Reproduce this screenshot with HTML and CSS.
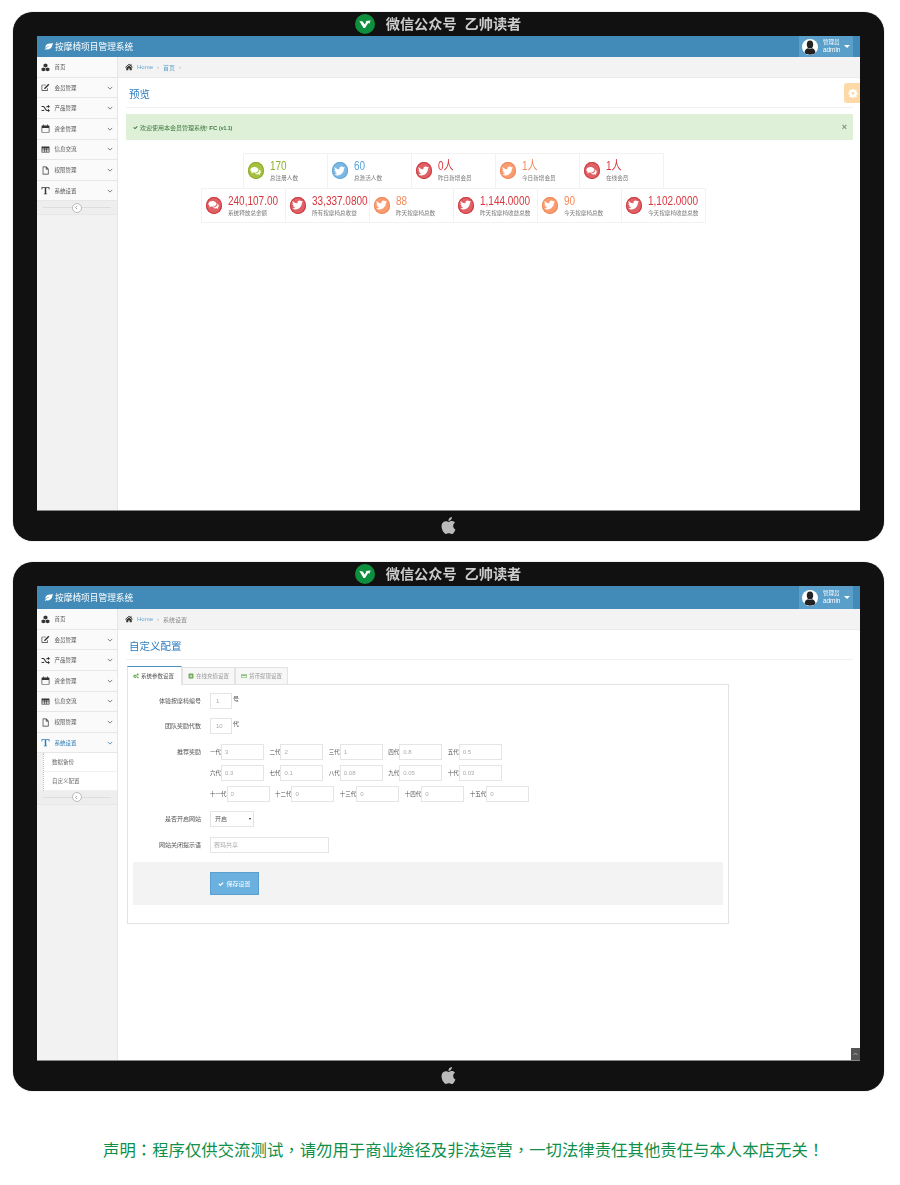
FILE: index.html
```html
<!DOCTYPE html>
<html>
    <head>
        <title>按摩椅项目管理系统</title>
        <meta charset="UTF-8">
        <link rel="stylesheet" href="styles.css">
    </head>
    <body>
        <svg class="defs" width="0" height="0">
            <symbol id="i-twitter" viewBox="0 0 24 24"><path d="M23.953 4.57a10 10 0 01-2.825.775 4.958 4.958 0 002.163-2.723c-.951.555-2.005.959-3.127 1.184a4.92 4.92 0 00-8.384 4.482C7.69 8.095 4.067 6.13 1.64 3.162a4.822 4.822 0 00-.666 2.475c0 1.71.87 3.213 2.188 4.096a4.904 4.904 0 01-2.228-.616v.06a4.923 4.923 0 003.946 4.827 4.996 4.996 0 01-2.212.085 4.936 4.936 0 004.604 3.417 9.867 9.867 0 01-6.102 2.105c-.39 0-.779-.023-1.17-.067a13.995 13.995 0 007.557 2.209c9.053 0 13.998-7.496 13.998-13.985 0-.21 0-.42-.015-.63A9.935 9.935 0 0024 4.59z"/></symbol>
            <symbol id="i-comments" viewBox="0 0 16 16"><path d="M6.5 2C3.2 2 .6 3.9.6 6.3c0 1.3.8 2.5 2 3.3-.2.8-.6 1.5-1.1 2 1.2-.1 2.300-.6 3.100-1.300.6.1 1.200.2 1.900.2 3.300 0 5.900-1.900 5.900-4.200S9.800 2 6.500 2z"/><path d="M13.600 5.800c.1.200.1.400.1.600 0 2.900-3 5.100-6.600 5.200.9.900 2.300 1.400 3.800 1.400.5 0 1-.1 1.500-.2.700.6 1.500 1 2.500 1.100-.4-.5-.7-1-.9-1.700 1-.7 1.600-1.700 1.600-2.800 0-1.500-.8-2.800-2-3.600z"/></symbol>
            <symbol id="i-cubes" viewBox="0 0 16 16"><path d="M8 1l3.500 1.500v3.800L8 7.800 4.500 6.300V2.500zM4.300 8L7.600 9.400v3.800L4.300 14.800 1 13.200V9.400zM11.700 8l3.300 1.400v3.800l-3.300 1.600-3.300-1.600V9.400z"/></symbol>
            <symbol id="i-edit" viewBox="0 0 16 16"><path d="M2.500 3H9v1.200H2.900a.7.700 0 00-.7.700v7.400c0 .4.300.7.700.7h7.400c.4 0 .7-.3.7-.7V9.500h1.200v3c0 1-.8 1.800-1.800 1.800H2.800c-1 0-1.800-.8-1.800-1.800V4.800C1 3.800 1.500 3 2.500 3z"/><path d="M13 1.500l1.800 1.800-6.800 6.800-2.600.8.800-2.600z"/></symbol>
            <symbol id="i-random" viewBox="0 0 16 16"><path d="M1 3.500h2.600c1.500 0 2.400 1 3.300 2.300L9 9c.7 1 1.300 1.700 2.300 1.700h1V8.500L16 11.500l-3.700 3v-2h-1c-1.700 0-2.700-1.100-3.600-2.500L5.600 6.900c-.7-1-1.200-1.600-2-1.600H1zM1 10.700h2.600c.7 0 1.200-.4 1.700-1l1.100 1.600c-.7.800-1.600 1.200-2.800 1.200H1zM12.300 1.500L16 4.500l-3.700 3v-2h-1c-.8 0-1.400.5-1.900 1.100L9.300 5c.6-.8 1-1.300 2-1.300h1z"/></symbol>
            <symbol id="i-calendar" viewBox="0 0 16 16"><path fill-rule="evenodd" d="M4 .8h1.500v2H10.500v-2H12v2h1.800c.7 0 1.200.5 1.200 1.200v10c0 .7-.5 1.200-1.200 1.200H2.200C1.500 15.200 1 14.700 1 14V4c0-.7.500-1.200 1.200-1.200H4zM2.200 7v7h11.600V7z"/></symbol>
            <symbol id="i-table" viewBox="0 0 16 16"><path fill-rule="evenodd" d="M1 2.500h14v11H1zM2.200 6v2h3.200V6zM6.500 6v2h3V6zM10.600 6v2h3.200V6zM2.200 9.200v3h3.200v-3zM6.500 9.200v3h3v-3zM10.600 9.200v3h3.200v-3z"/></symbol>
            <symbol id="i-file" viewBox="0 0 16 16"><path fill-rule="evenodd" d="M3 1h6.500L13.500 5v10H3zM4.200 2.200v11.600h8.100V6H8.500V2.200zM9.700 2.800v2h2z"/></symbol>
            <symbol id="i-text" viewBox="0 0 16 16"><path d="M1 2h14v4h-1c-.2-1.500-.6-2.500-2-2.500H9.300v9.300c0 .7.500.9 1.700 1v.9H5v-.9c1.200-.1 1.700-.3 1.700-1V3.500H4C2.600 3.500 2.200 4.500 2 6H1z"/></symbol>
            <symbol id="i-leaf" viewBox="0 0 16 16"><path d="M15.500 1.500c-1 1-2.500 1.200-5 1.300C5.500 3 2.500 5.500 2.500 9c0 .6.100 1.100.3 1.600C4.500 8.500 7 7 10 6.500 7 7.800 3.800 10 1.200 13.500l1 .9c.6-.8 1.100-1.500 1.700-2 1 .7 2 1 3.100.9C12 13 15.500 8 15.500 1.500z"/></symbol>
            <symbol id="i-home" viewBox="0 0 16 16"><path d="M8 1.500l3 2.600V2.500h2v3.400l2.800 2.500-.8.900L8 3.400 1 9.300l-.8-.900z"/><path d="M8 4.800l5.500 4.700v5H9.500v-3.500h-3v3.500H2.500v-5z"/></symbol>
            <symbol id="i-gear" viewBox="0 0 16 16"><path fill-rule="evenodd" d="M6.800 1h2.400l.4 2 1.300.6 1.700-1.100 1.700 1.700-1.100 1.700.5 1.300 2.100.4v2.400l-2.100.4-.5 1.300 1.100 1.700-1.700 1.700-1.700-1.100-1.300.5-.4 2.100H6.800l-.4-2.100-1.300-.5-1.700 1.100-1.700-1.700 1.100-1.700-.5-1.300-2-.4V7.600l2-.4.500-1.300-1.100-1.700 1.700-1.700 1.700 1.100 1.300-.6zM8 5.800a2.400 2.400 0 100 4.800 2.400 2.400 0 000-4.800z"/></symbol>
            <symbol id="i-check" viewBox="0 0 16 16"><path d="M1 8.500l2.300-2.300 3 3L12.700 3 15 5.300l-8.700 8.500z"/></symbol>
            <symbol id="i-plus" viewBox="0 0 16 16"><path fill-rule="evenodd" d="M3 1.500h10c.8 0 1.500.7 1.500 1.500v10c0 .8-.7 1.500-1.500 1.500H3c-.8 0-1.500-.7-1.500-1.500V3c0-.8.700-1.500 1.500-1.500zM7 4.500V7H4.500v2H7v2.500h2V9h2.500V7H9V4.500z"/></symbol>
            <symbol id="i-card" viewBox="0 0 16 16"><path fill-rule="evenodd" d="M1 2.500h14v11H1zM2.500 4v1.800h11V4zM2.500 8v4h11V8z"/></symbol>
            <symbol id="i-cogs" viewBox="0 0 16 16"><path fill-rule="evenodd" d="M5.500 3.500l1 1.500 1.700-.3.500 1.700 1.600.7-.7 1.600.7 1.600-1.600.7-.5 1.700-1.700-.3-1 1.300-1.200-1.300-1.700.3-.5-1.700L.5 10.300l.7-1.600-.7-1.600 1.600-.7.500-1.700 1.700.3zM5.400 7a1.700 1.700 0 100 3.400 1.700 1.700 0 000-3.400z"/><circle cx="12.500" cy="4" r="2.800"/><circle cx="13" cy="11.500" r="2.300"/></symbol>
            <symbol id="i-down" viewBox="0 0 16 16"><path d="M2 5l6 6 6-6" fill="none" stroke="currentColor" stroke-width="2"/></symbol>
            <symbol id="i-left" viewBox="0 0 16 16"><path d="M10 3L5 8l5 5" fill="none" stroke="currentColor" stroke-width="2.500"/></symbol>
            <symbol id="i-apple" viewBox="0 0 24 24"><path d="M12.152 6.896c-.948 0-2.415-1.078-3.96-1.04-2.04.027-3.91 1.183-4.961 3.014-2.117 3.675-.546 9.103 1.519 12.09 1.013 1.454 2.208 3.09 3.792 3.039 1.52-.065 2.09-.987 3.935-.987 1.831 0 2.35.987 3.96.948 1.637-.026 2.676-1.48 3.676-2.948 1.156-1.688 1.636-3.325 1.662-3.415-.039-.013-3.182-1.221-3.22-4.857-.026-3.04 2.48-4.494 2.597-4.559-1.429-2.09-3.623-2.324-4.39-2.376-2-.156-3.675 1.09-4.61 1.09zM15.53 3.83c.843-1.012 1.4-2.427 1.245-3.83-1.207.052-2.662.805-3.532 1.818-.78.896-1.454 2.338-1.273 3.714 1.338.104 2.715-.688 3.559-1.701"/></symbol>
            <symbol id="i-user" viewBox="0 0 16 16"><ellipse cx="8" cy="5.500" rx="3.200" ry="4"/><path d="M2.500 14.500c0-3.500 1.500-5 3.500-5.300.6.500 1.300.8 2 .8s1.400-.3 2-.8c2 .3 3.500 1.800 3.500 5.300-1.500.8-3.500 1.200-5.500 1.200s-4-.4-5.500-1.200z"/></symbol>
            <symbol id="i-wx" viewBox="0 0 16 16"><path d="M1.500 4.500l4 .6 2 3.400L9.700 5.300 8.500 4.600l6-.6-1.800 4-.9-1.300-3.800 5.800H6.300z"/></symbol>
        </svg>

        <div class="page">

            <!-- first monitor: overview -->
            <div class="monitor">
                <div class="bezel-top">
                    <span class="wx-logo"><svg class="ico"><use href="#i-wx"/></svg></span>
                    <span class="bezel-title">微信公众号&nbsp;&nbsp;乙帅读者</span>
                </div>
                <div class="screen">
                    <div class="topbar">
                        <svg class="ico brand-ico"><use href="#i-leaf"/></svg>
                        <span class="brand">按摩椅项目管理系统</span>
                        <div class="user">
                            <span class="avatar"><svg class="ico"><use href="#i-user"/></svg></span>
                            <span class="user-name">管理员<br><span class="user-id">admin</span></span>
                            <span class="caret"></span>
                        </div>
                    </div>
                    <div class="body-wrap">
                        <div class="sidebar">
                            <div class="nav-item"><svg class="ico nav-ico"><use href="#i-cubes"/></svg><span class="nav-text">首页</span></div>
                            <div class="nav-item"><svg class="ico nav-ico"><use href="#i-edit"/></svg><span class="nav-text">会员管理</span><svg class="ico nav-arrow"><use href="#i-down"/></svg></div>
                            <div class="nav-item"><svg class="ico nav-ico"><use href="#i-random"/></svg><span class="nav-text">产品管理</span><svg class="ico nav-arrow"><use href="#i-down"/></svg></div>
                            <div class="nav-item"><svg class="ico nav-ico"><use href="#i-calendar"/></svg><span class="nav-text">资金管理</span><svg class="ico nav-arrow"><use href="#i-down"/></svg></div>
                            <div class="nav-item"><svg class="ico nav-ico"><use href="#i-table"/></svg><span class="nav-text">信息交流</span><svg class="ico nav-arrow"><use href="#i-down"/></svg></div>
                            <div class="nav-item"><svg class="ico nav-ico"><use href="#i-file"/></svg><span class="nav-text">权限管理</span><svg class="ico nav-arrow"><use href="#i-down"/></svg></div>
                            <div class="nav-item"><svg class="ico nav-ico"><use href="#i-text"/></svg><span class="nav-text">系统设置</span><svg class="ico nav-arrow"><use href="#i-down"/></svg></div>
                            <div class="toggler"><span class="toggler-btn"><svg class="ico"><use href="#i-left"/></svg></span></div>
                        </div>
                        <div class="main">
                            <div class="crumbs">
                                <svg class="ico crumb-home"><use href="#i-home"/></svg>
                                <span class="crumb-link">Home</span><span class="crumb-sep">›</span>
                                <span class="crumb-link">首页</span><span class="crumb-sep">›</span>
                            </div>
                            <div class="content">
                                <div class="settings-tab"><svg class="ico"><use href="#i-gear"/></svg></div>
                                <h3 class="page-title">预览</h3>
                                <div class="alert">
                                    <svg class="ico alert-ico"><use href="#i-check"/></svg>
                                    <span>欢迎使用本会员管理系统! <b>FC</b> <b class="ver">(v1.1)</b></span>
                                    <span class="alert-close">×</span>
                                </div>
                                <div class="stats">
                                    <div class="stat-row">
                                        <div class="stat green"><span class="stat-ico"><svg class="ico"><use href="#i-comments"/></svg></span><div><div class="stat-num">170</div><div class="stat-label">总注册人数</div></div></div>
                                        <div class="stat blue"><span class="stat-ico"><svg class="ico"><use href="#i-twitter"/></svg></span><div><div class="stat-num">60</div><div class="stat-label">总激活人数</div></div></div>
                                        <div class="stat red"><span class="stat-ico"><svg class="ico"><use href="#i-twitter"/></svg></span><div><div class="stat-num">0人</div><div class="stat-label">昨日新增会员</div></div></div>
                                        <div class="stat orange"><span class="stat-ico"><svg class="ico"><use href="#i-twitter"/></svg></span><div><div class="stat-num">1人</div><div class="stat-label">今日新增会员</div></div></div>
                                        <div class="stat red"><span class="stat-ico"><svg class="ico"><use href="#i-comments"/></svg></span><div><div class="stat-num">1人</div><div class="stat-label">在线会员</div></div></div>
                                    </div>
                                    <div class="stat-row">
                                        <div class="stat red"><span class="stat-ico"><svg class="ico"><use href="#i-comments"/></svg></span><div><div class="stat-num">240,107.00</div><div class="stat-label">系统释放总金额</div></div></div>
                                        <div class="stat red"><span class="stat-ico"><svg class="ico"><use href="#i-twitter"/></svg></span><div><div class="stat-num">33,337.0800</div><div class="stat-label">所有按摩椅总收益</div></div></div>
                                        <div class="stat orange"><span class="stat-ico"><svg class="ico"><use href="#i-twitter"/></svg></span><div><div class="stat-num">88</div><div class="stat-label">昨天按摩椅总数</div></div></div>
                                        <div class="stat red"><span class="stat-ico"><svg class="ico"><use href="#i-twitter"/></svg></span><div><div class="stat-num">1,144.0000</div><div class="stat-label">昨天按摩椅收益总数</div></div></div>
                                        <div class="stat orange"><span class="stat-ico"><svg class="ico"><use href="#i-twitter"/></svg></span><div><div class="stat-num">90</div><div class="stat-label">今天按摩椅总数</div></div></div>
                                        <div class="stat red"><span class="stat-ico"><svg class="ico"><use href="#i-twitter"/></svg></span><div><div class="stat-num">1,102.0000</div><div class="stat-label">今天按摩椅收益总数</div></div></div>
                                    </div>
                                </div>
                            </div>
                        </div>
                    </div>
                </div>
                <div class="bezel-bottom"><svg class="ico apple"><use href="#i-apple"/></svg></div>
            </div>

            <!-- second monitor: settings form -->
            <div class="monitor">
                <div class="bezel-top">
                    <span class="wx-logo"><svg class="ico"><use href="#i-wx"/></svg></span>
                    <span class="bezel-title">微信公众号&nbsp;&nbsp;乙帅读者</span>
                </div>
                <div class="screen">
                    <div class="topbar tall">
                        <svg class="ico brand-ico"><use href="#i-leaf"/></svg>
                        <span class="brand">按摩椅项目管理系统</span>
                        <div class="user">
                            <span class="avatar"><svg class="ico"><use href="#i-user"/></svg></span>
                            <span class="user-name">管理员<br><span class="user-id">admin</span></span>
                            <span class="caret"></span>
                        </div>
                    </div>
                    <div class="body-wrap">
                        <div class="sidebar">
                            <div class="nav-item"><svg class="ico nav-ico"><use href="#i-cubes"/></svg><span class="nav-text">首页</span></div>
                            <div class="nav-item"><svg class="ico nav-ico"><use href="#i-edit"/></svg><span class="nav-text">会员管理</span><svg class="ico nav-arrow"><use href="#i-down"/></svg></div>
                            <div class="nav-item"><svg class="ico nav-ico"><use href="#i-random"/></svg><span class="nav-text">产品管理</span><svg class="ico nav-arrow"><use href="#i-down"/></svg></div>
                            <div class="nav-item"><svg class="ico nav-ico"><use href="#i-calendar"/></svg><span class="nav-text">资金管理</span><svg class="ico nav-arrow"><use href="#i-down"/></svg></div>
                            <div class="nav-item"><svg class="ico nav-ico"><use href="#i-table"/></svg><span class="nav-text">信息交流</span><svg class="ico nav-arrow"><use href="#i-down"/></svg></div>
                            <div class="nav-item"><svg class="ico nav-ico"><use href="#i-file"/></svg><span class="nav-text">权限管理</span><svg class="ico nav-arrow"><use href="#i-down"/></svg></div>
                            <div class="nav-item active"><svg class="ico nav-ico"><use href="#i-text"/></svg><span class="nav-text">系统设置</span><svg class="ico nav-arrow"><use href="#i-down"/></svg></div>
                            <div class="sub-nav">
                                <div class="sub-item">数据备份</div>
                                <div class="sub-item">自定义配置</div>
                            </div>
                            <div class="toggler"><span class="toggler-btn"><svg class="ico"><use href="#i-left"/></svg></span></div>
                        </div>
                        <div class="main">
                            <div class="crumbs">
                                <svg class="ico crumb-home"><use href="#i-home"/></svg>
                                <span class="crumb-link">Home</span><span class="crumb-sep">›</span>
                                <span class="crumb-now">系统设置</span>
                            </div>
                            <div class="content">
                                <h3 class="page-title">自定义配置</h3>
                                <div class="tab-box">
                                    <div class="tabs">
                                        <div class="tab active"><svg class="ico tab-ico"><use href="#i-cogs"/></svg>系统参数设置</div>
                                        <div class="tab"><svg class="ico tab-ico"><use href="#i-plus"/></svg>在线充值设置</div>
                                        <div class="tab"><svg class="ico tab-ico"><use href="#i-card"/></svg>货币提现设置</div>
                                    </div>
                                    <div class="pane">
                                        <div class="form-row">
                                            <label class="form-label">体验按摩椅编号</label>
                                            <input class="field short" type="text" value="1"><span class="unit">号</span>
                                        </div>
                                        <div class="form-row">
                                            <label class="form-label">团队奖励代数</label>
                                            <input class="field short" type="text" value="10"><span class="unit">代</span>
                                        </div>
                                        <div class="form-row top">
                                            <label class="form-label">推荐奖励</label>
                                            <div class="rewards">
                                                <div class="reward-row">
                                                    <label class="reward">一代<input class="field" type="text" value="3"></label>
                                                    <label class="reward">二代<input class="field" type="text" value="2"></label>
                                                    <label class="reward">三代<input class="field" type="text" value="1"></label>
                                                    <label class="reward">四代<input class="field" type="text" value="0.8"></label>
                                                    <label class="reward">五代<input class="field" type="text" value="0.5"></label>
                                                </div>
                                                <div class="reward-row">
                                                    <label class="reward">六代<input class="field" type="text" value="0.3"></label>
                                                    <label class="reward">七代<input class="field" type="text" value="0.1"></label>
                                                    <label class="reward">八代<input class="field" type="text" value="0.08"></label>
                                                    <label class="reward">九代<input class="field" type="text" value="0.05"></label>
                                                    <label class="reward">十代<input class="field" type="text" value="0.03"></label>
                                                </div>
                                                <div class="reward-row">
                                                    <label class="reward">十一代<input class="field" type="text" value="0"></label>
                                                    <label class="reward">十二代<input class="field" type="text" value="0"></label>
                                                    <label class="reward">十三代<input class="field" type="text" value="0"></label>
                                                    <label class="reward">十四代<input class="field" type="text" value="0"></label>
                                                    <label class="reward">十五代<input class="field" type="text" value="0"></label>
                                                </div>
                                            </div>
                                        </div>
                                        <div class="form-row">
                                            <label class="form-label">是否开启网站</label>
                                            <span class="select-wrap"><select class="field select"><option>开启</option></select></span>
                                        </div>
                                        <div class="form-row">
                                            <label class="form-label">网站关闭提示语</label>
                                            <input class="field wide" type="text" value="赛玛共享">
                                        </div>
                                        <div class="form-actions">
                                            <button class="save-btn" type="button"><svg class="ico"><use href="#i-check"/></svg>保存设置</button>
                                        </div>
                                    </div>
                                </div>
                            </div>
                        </div>
                    </div>
                    <div class="to-top"><svg class="ico"><use href="#i-down"/></svg></div>
                </div>
                <div class="bezel-bottom"><svg class="ico apple"><use href="#i-apple"/></svg></div>
            </div>

            <p class="notice">声明：程序仅供交流测试，请勿用于商业途径及非法运营，一切法律责任其他责任与本人本店无关！</p>
        </div>
    </body>
</html>
```

FILE: styles.css
```css
html, body{
    margin: 0;
    padding: 0;
    background-color: #fff;
    font-family: "Liberation Sans", "Noto Sans CJK SC", sans-serif;
}
.defs{
    position: absolute;
}
.ico{
    display: block;
    width: 100%;
    height: 100%;
    fill: currentColor;
}
.page{
    display: flex;
    flex-direction: column;
    align-items: flex-start;
    gap: 21px;
    padding: 12px 0 0 13px;
}

/* monitor frame */
.monitor{
    display: flex;
    flex-direction: column;
    box-sizing: border-box;
    width: 871px;
    height: 529px;
    padding: 0 24px;
    background-color: #111;
    border-radius: 20px;
    box-shadow: 0 0 1px #666;
}
.bezel-top{
    display: flex;
    align-items: center;
    justify-content: center;
    gap: 11px;
    flex: none;
    height: 24px;
    padding-right: 21px;
}
.wx-logo{
    width: 20px;
    height: 20px;
    box-sizing: border-box;
    padding: 3px;
    border-radius: 50%;
    background-color: #0e8f3e;
    color: #fff;
}
.bezel-title{
    color: #ccc;
    font-size: 14.2px;
    font-weight: bold;
    line-height: 20px;
    filter: blur(0.4px);
}
.bezel-bottom{
    display: flex;
    align-items: center;
    justify-content: center;
    flex: 1;
}
.apple{
    width: 17px;
    height: 19px;
    color: #bbb;
}
.screen{
    position: relative;
    display: flex;
    flex-direction: column;
    flex: none;
    height: 474.5px;
    background-color: #fff;
    border-bottom: 1px solid #888;
    box-sizing: border-box;
    filter: blur(0.3px);
}

/* top bar */
.topbar{
    display: flex;
    align-items: center;
    flex: none;
    height: 21.3px;
    padding: 0 7px 0 7px;
    background-color: #428bb9;
    color: #fff;
}
.topbar.tall{
    height: 23.3px;
}
.brand-ico{
    width: 9px;
    height: 9px;
    margin-right: 2px;
}
.brand{
    font-size: 8.7px;
}
.user{
    display: flex;
    align-items: center;
    align-self: stretch;
    width: 54px;
    margin-left: auto;
    background-color: #5a9fc9;
}
.avatar{
    flex: none;
    width: 16px;
    height: 16px;
    margin-left: 3px;
    border-radius: 50%;
    background-color: #fff;
    color: #222;
    overflow: hidden;
}
.user-name{
    margin-left: 5px;
    font-size: 5.5px;
    line-height: 7px;
}
.user-id{
    font-size: 6.4px;
}
.caret{
    margin-left: 4px;
    border-top: 3px solid #fff;
    border-left: 3px solid transparent;
    border-right: 3px solid transparent;
}

/* sidebar */
.body-wrap{
    display: flex;
    flex: 1;
    min-height: 0;
}
.sidebar{
    flex: none;
    box-sizing: border-box;
    width: 80.5px;
    background-color: #f2f2f2;
    border-right: 1px solid #e6e6e6;
}
.nav-item{
    display: flex;
    align-items: center;
    box-sizing: border-box;
    height: 20.6px;
    padding: 0 4px;
    background-color: #fafafa;
    border-bottom: 1px solid #e7e7e7;
    color: #555;
}
.nav-ico{
    flex: none;
    width: 9px;
    height: 9px;
    color: #333;
}
.nav-text{
    margin-left: 4.5px;
    font-size: 5.5px;
}
.nav-arrow{
    flex: none;
    width: 6px;
    height: 6px;
    margin-left: auto;
    color: #555;
}
.nav-item.active .nav-text,
.nav-item.active .nav-ico,
.nav-item.active .nav-arrow{
    color: #2b7cb5;
}
.sub-nav{
    margin-left: 6px;
    border-left: 1px dotted #a9c9de;
    background-color: #fff;
}
.sub-item{
    box-sizing: border-box;
    height: 18.7px;
    padding-left: 8px;
    border-bottom: 1px solid #f0f0f0;
    color: #666;
    font-size: 5.5px;
    line-height: 18px;
}
.toggler{
    display: flex;
    align-items: center;
    justify-content: center;
    height: 14px;
    background-color: #eee;
    background-image: linear-gradient(#ddd, #ddd);
    background-size: 68px 1px;
    background-position: center;
    background-repeat: no-repeat;
    border-bottom: 1px solid #e7e7e7;
    box-sizing: border-box;
}
.toggler-btn{
    box-sizing: border-box;
    width: 10px;
    height: 10px;
    padding: 1.5px;
    border: 1px solid #bbb;
    border-radius: 50%;
    background-color: #fff;
    color: #888;
}

/* main area */
.main{
    flex: 1;
    min-width: 0;
}
.crumbs{
    display: flex;
    align-items: center;
    box-sizing: border-box;
    height: 21px;
    padding-left: 7.5px;
    background-color: #f3f3f3;
    border-bottom: 1px solid #ebebeb;
    font-size: 6px;
}
.crumb-home{
    width: 8px;
    height: 8px;
    margin-right: 4px;
    color: #333;
}
.crumb-link{
    color: #6aa7d0;
}
.crumb-now{
    color: #888;
}
.crumb-sep{
    margin: 0 4px;
    color: #aaa;
}
.content{
    position: relative;
    padding: 0 7px 0 8.5px;
}
.page-title{
    box-sizing: border-box;
    height: 29.5px;
    margin: 0;
    padding: 7px 0 0 3px;
    border-bottom: 1px solid #f0f0f0;
    color: #2b7cc0;
    font-size: 10.5px;
    font-weight: normal;
    line-height: 18px;
}
.settings-tab{
    position: absolute;
    top: 5px;
    right: 0;
    box-sizing: border-box;
    width: 16px;
    height: 20px;
    padding: 5px 2px 5px 4px;
    background-color: #fcd9a5;
    border-radius: 3px 0 0 3px;
    color: #fff;
}
.alert{
    display: flex;
    align-items: center;
    height: 26px;
    margin-top: 6.5px;
    padding: 0 6px 0 7px;
    background-color: #dff0d8;
    color: #3c763d;
    font-size: 6px;
}
.alert-ico{
    flex: none;
    width: 5px;
    height: 5px;
    margin-right: 2px;
}
.ver{
    font-size: 5px;
}
.alert-close{
    margin-left: auto;
    color: #888;
    font-size: 9px;
    font-weight: bold;
}

/* stat cells */
.stats{
    width: 505px;
    margin: 13px 0 0 75px;
}
.stat-row{
    display: flex;
    justify-content: center;
}
.stat{
    display: flex;
    align-items: center;
    box-sizing: border-box;
    width: 84px;
    height: 34.3px;
    padding: 0 0 0 3.5px;
    border: 1px solid #f2f2f2;
    border-width: 1px 0 0 1px;
}
.stat:last-child{
    width: 85px;
    border-right-width: 1px;
}
.stat-row:last-child .stat{
    height: 35px;
    border-bottom-width: 1px;
}
.stat-ico{
    flex: none;
    box-sizing: border-box;
    width: 16px;
    height: 17px;
    margin-right: 6.5px;
    padding: 2.5px;
    border-radius: 50%;
    color: #fff;
}
.stat-num{
    width: 60px;
    font-size: 12.5px;
    line-height: 14px;
    white-space: nowrap;
    transform: scaleX(0.8);
    transform-origin: left center;
}
.stat-label{
    margin-top: 2px;
    color: #777;
    font-size: 5.6px;
    line-height: 7px;
    white-space: nowrap;
}
.green .stat-ico{ background-color: #a4c23f; box-shadow: inset 0 0 0 1px #8eaa2c; }
.green .stat-num{ color: #8fb128; }
.blue .stat-ico{ background-color: #7db8e3; box-shadow: inset 0 0 0 1px #62a6d8; }
.blue .stat-num{ color: #5aa5d8; }
.red .stat-ico{ background-color: #df6065; box-shadow: inset 0 0 0 1px #cc3a40; }
.red .stat-num{ color: #d9363e; }
.orange .stat-ico{ background-color: #f99c70; box-shadow: inset 0 0 0 1px #ef8a5a; }
.orange .stat-num{ color: #f58a5a; }

/* settings form */
.tab-box{
    width: 602px;
    margin: 6px 0 0 1px;
}
.tabs{
    display: flex;
    align-items: flex-end;
    height: 18px;
}
.tab{
    display: flex;
    align-items: center;
    box-sizing: border-box;
    width: 53px;
    height: 16.5px;
    padding-left: 5px;
    background-color: #f7f7f7;
    border: 1px solid #e3e3e3;
    border-bottom: none;
    color: #999;
    font-size: 5.5px;
    white-space: nowrap;
}
.tab.active{
    position: relative;
    width: 55px;
    height: 18.5px;
    margin-bottom: -1px;
    background-color: #fff;
    border-top: 1.5px solid #4b8fc0;
    color: #555;
}
.tab-ico{
    flex: none;
    width: 6px;
    height: 6px;
    margin-right: 2px;
    color: #6ba84f;
}
.pane{
    display: flex;
    flex-direction: column;
    gap: 9.5px;
    box-sizing: border-box;
    height: 240.5px;
    padding: 8px 5px 0;
    border: 1px solid #e3e3e3;
}
.form-row{
    display: flex;
    align-items: center;
}
.form-row.top{
    align-items: flex-start;
}
.form-label{
    flex: none;
    box-sizing: border-box;
    width: 68px;
    margin-right: 9px;
    color: #555;
    font-size: 6px;
    line-height: 16px;
    text-align: right;
}
.field{
    box-sizing: border-box;
    width: 43px;
    height: 16px;
    margin: 0;
    padding: 0 3px;
    border: 1px solid #e5e5e5;
    border-radius: 0;
    background-color: #fff;
    color: #aaa;
    font-family: inherit;
    font-size: 6px;
    outline: none;
}
.field.short{
    width: 22px;
    padding-left: 5px;
}
.field.wide{
    width: 119px;
}
.unit{
    align-self: flex-start;
    margin-left: 1px;
    color: #555;
    font-size: 6px;
    line-height: 12px;
}
.rewards{
    display: flex;
    flex-direction: column;
    gap: 5px;
}
.reward-row{
    display: flex;
    gap: 5.4px;
}
.reward{
    display: flex;
    align-items: center;
    color: #555;
    font-size: 5.5px;
}
.select-wrap{
    position: relative;
    display: block;
    width: 44px;
}
.select-wrap::after{
    content: "";
    position: absolute;
    top: 7px;
    right: 3px;
    border-top: 2.5px solid #222;
    border-left: 1.5px solid transparent;
    border-right: 1.5px solid transparent;
}
.field.select{
    display: block;
    width: 44px;
    padding-left: 4px;
    color: #555;
    -webkit-appearance: none;
    appearance: none;
}
.form-actions{
    box-sizing: border-box;
    height: 43px;
    padding: 10px 0 0 77px;
    background-color: #f3f3f3;
}
.save-btn{
    display: flex;
    align-items: center;
    justify-content: center;
    gap: 2px;
    box-sizing: border-box;
    width: 49px;
    height: 23px;
    padding: 0;
    border: 1px solid #5a9fd0;
    background-color: #6bb1e0;
    color: #fff;
    font-family: inherit;
    font-size: 6px;
}
.save-btn .ico{
    flex: none;
    width: 6px;
    height: 6px;
}
.to-top{
    position: absolute;
    right: 0;
    bottom: 0;
    box-sizing: border-box;
    width: 9px;
    height: 12px;
    padding: 3px 2px;
    background-color: #555;
    color: #ddd;
    transform: scaleY(-1);
}

.notice{
    margin: 25px 0 0;
    padding-left: 90px;
    color: #0f8f4a;
    font-family: "Noto Sans CJK TC", "Noto Sans CJK SC", sans-serif;
    font-size: 16.4px;
    line-height: 24px;
}
```
